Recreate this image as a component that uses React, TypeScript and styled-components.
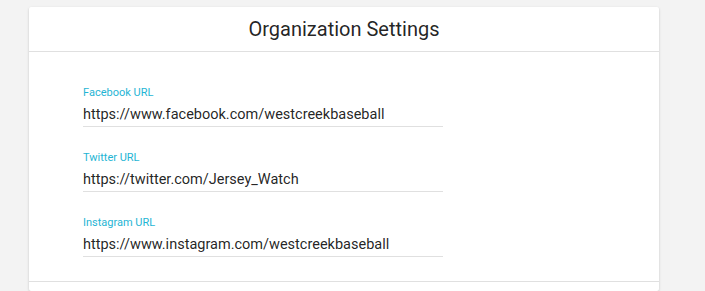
import React from "react";
import styled, { createGlobalStyle } from "styled-components";

const Global = createGlobalStyle`
  html, body { margin: 0; padding: 0; background: #f3f3f3; }
  body { font-family: Roboto, "Liberation Sans", sans-serif; overflow: hidden; }
`;

const Page = styled.div`
  padding: 7px 46px 0 29px;
`;

const Card = styled.div`
  background: #fff;
  border-radius: 2px;
  box-shadow: 0 1px 3px rgba(0, 0, 0, 0.12), 0 1px 2px rgba(0, 0, 0, 0.08);
`;

const Header = styled.div`
  height: 44px;
  display: flex;
  align-items: center;
  justify-content: center;
  border-bottom: 1px solid #e0e0e0;
`;

const Title = styled.h1`
  margin: 0;
  font-size: 20px;
  font-weight: 400;
  color: rgba(0, 0, 0, 0.87);
  line-height: 24px;
`;

const Body = styled.div`
  padding: 34px 0 24px 54px;
  display: flex;
  flex-direction: column;
  gap: 24px;
  border-bottom: 1px solid #e0e0e0;
`;

const Field = styled.div`
  width: 360px;
  display: flex;
  flex-direction: column;
`;

const Label = styled.label`
  font-size: 11px;
  line-height: 13px;
  color: #1fb5d4;
`;

const Value = styled.div`
  margin-top: 6px;
  font-size: 14.5px;
  line-height: 20px;
  padding-bottom: 1px;
  color: rgba(0, 0, 0, 0.87);
  border-bottom: 1px solid #e0e0e0;
`;

const Footer = styled.div`
  height: 9px;
`;

const fields = [
  { label: "Facebook URL", value: "https://www.facebook.com/westcreekbaseball" },
  { label: "Twitter URL", value: "https://twitter.com/Jersey_Watch" },
  { label: "Instagram URL", value: "https://www.instagram.com/westcreekbaseball" },
];

export default function App() {
  return (
    <>
      <Global />
      <Page>
        <Card>
          <Header>
            <Title>Organization Settings</Title>
          </Header>
          <Body>
            {fields.map((f) => (
              <Field key={f.label}>
                <Label>{f.label}</Label>
                <Value>{f.value}</Value>
              </Field>
            ))}
          </Body>
          <Footer />
        </Card>
      </Page>
    </>
  );
}
